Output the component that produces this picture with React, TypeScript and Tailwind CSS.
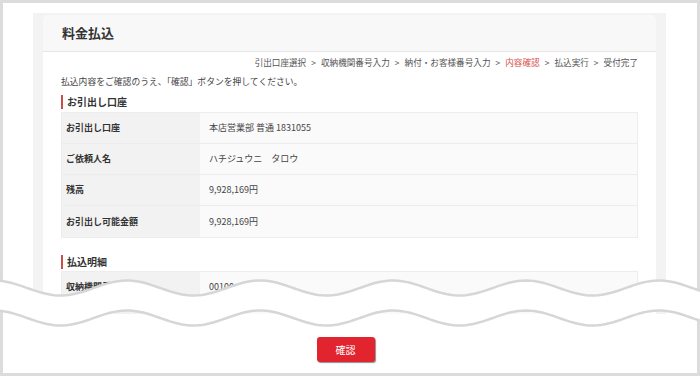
const FONT = { fontFamily: '"Noto Sans CJK JP", "Noto Sans", sans-serif' };

const accountRows = [
  { label: 'お引出し口座', value: '本店営業部 普通 1831055' },
  { label: 'ご依頼人名', value: 'ハチジュウニ　タロウ' },
  { label: '残高', value: '9,928,169円' },
  { label: 'お引出し可能金額', value: '9,928,169円' },
];

const detailRows = [
  { label: '収納機関番号', value: '00100' },
  { label: '納付番号', value: '1543219876' },
];

const steps = ['引出口座選択', '収納機関番号入力', '納付・お客様番号入力', '内容確認', '払込実行', '受付完了'];

// torn-edge wave, crest at x=393, period 133
function wave(center: number) {
  const pts: string[] = [];
  for (let x = -10; x <= 710; x += 4) {
    const y = center - 7.5 * Math.cos((2 * Math.PI * (x - 393)) / 133);
    pts.push(`${x},${y.toFixed(2)}`);
  }
  return pts;
}

const topWave = wave(288);
const bottomWave = wave(318);
const bandPath = `M${topWave.join(' L')} L${[...bottomWave].reverse().join(' L')} Z`;

function SectionTitle({ children }: { children: string }) {
  return (
    <div className="flex items-center gap-[4px] h-[14px]">
      <span className="w-[2px] h-[14px] bg-[#c8504a]" />
      <span className="text-[10px] font-bold leading-[14px] text-[#333]">{children}</span>
    </div>
  );
}

function InfoTable({ rows }: { rows: { label: string; value: string }[] }) {
  return (
    <div className="border border-[#ededed]">
      {rows.map((row) => (
        <div key={row.label} className="flex h-[31px] border-b border-[#ececec] last:border-b-0">
          <div className="w-[138px] shrink-0 bg-[#f2f2f2] pl-[4px] flex items-center text-[9px] font-bold text-[#333]">
            {row.label}
          </div>
          <div className="flex-1 bg-[#fafafa] pl-[9px] flex items-center text-[9px] text-[#444]">
            {row.value}
          </div>
        </div>
      ))}
    </div>
  );
}

export default function App() {
  return (
    <div className="relative w-[700px] h-[376px] overflow-hidden bg-white" style={FONT}>
      <div className="h-[314px] border-x-[3px] border-t-[3px] border-[#dcdcdc] overflow-hidden">
        <div className="mt-[10px] ml-[30px] mr-[31px] bg-[#f3f3f3] px-[10px] pt-[2px] h-[400px]">
          <div className="bg-white rounded-t-[6px] h-full">
            <div className="h-[37px] bg-[#f8f8f8] rounded-t-[6px] border-b border-[#e6e6e6] pl-[19px] flex items-center">
              <h1 className="text-[13px] font-bold text-[#333]">料金払込</h1>
            </div>
            <div className="pl-[18px] pr-[18px]">
              <div className="pt-[3px] leading-[14px] text-[8.6px] text-[#555] text-right">
                {steps.map((s, i) => (
                  <span key={s}>
                    {i > 0 && <span className="mx-[5px]">&gt;</span>}
                    <span className={s === '内容確認' ? 'text-[#d9534f]' : ''}>{s}</span>
                  </span>
                ))}
              </div>
              <p className="mt-[6px] leading-[14px] text-[8.8px] text-[#444]">
                払込内容をご確認のうえ、「確認」ボタンを押してください。
              </p>
              <div className="mt-[6px]">
                <SectionTitle>お引出し口座</SectionTitle>
              </div>
              <div className="mt-[3px]">
                <InfoTable rows={accountRows} />
              </div>
              <div className="mt-[17px]">
                <SectionTitle>払込明細</SectionTitle>
              </div>
              <div className="mt-[2px]">
                <InfoTable rows={detailRows} />
              </div>
            </div>
          </div>
        </div>
      </div>
      <div className="h-[62px] border-x-[3px] border-b-[3px] border-[#dcdcdc] flex justify-center pt-[23px] pr-[9px]">
        <button className="w-[58px] h-[25px] rounded-[3px] bg-[#e1242d] text-white text-[10px] shadow-[1px_1px_1px_rgba(0,0,0,0.45)]">
          確認
        </button>
      </div>
      <svg className="absolute left-0 top-0 pointer-events-none" width="700" height="376" viewBox="0 0 700 376">
        <path d={bandPath} fill="#ffffff" />
        <polyline points={topWave.join(' ')} fill="none" stroke="#d6d6d6" strokeWidth="2.5" />
        <polyline points={bottomWave.join(' ')} fill="none" stroke="#d6d6d6" strokeWidth="2.5" />
      </svg>
    </div>
  );
}
